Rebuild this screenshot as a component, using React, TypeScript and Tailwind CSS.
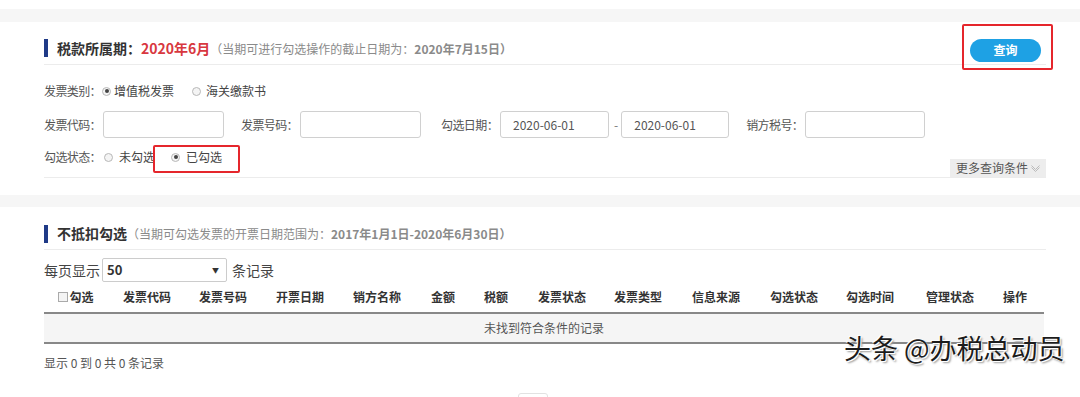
import React from "react";

const FONT = '"Noto Sans CJK SC", "Noto Sans", sans-serif';

const COLUMNS = [
  { label: "勾选", w: "w-[64px]", check: true },
  { label: "发票代码", w: "w-[78px]" },
  { label: "发票号码", w: "w-[74px]" },
  { label: "开票日期", w: "w-[80px]" },
  { label: "销方名称", w: "w-[74px]" },
  { label: "金额", w: "w-[58px]" },
  { label: "税额", w: "w-[48px]" },
  { label: "发票状态", w: "w-[84px]" },
  { label: "发票类型", w: "w-[68px]" },
  { label: "信息来源", w: "w-[88px]" },
  { label: "勾选状态", w: "w-[68px]" },
  { label: "勾选时间", w: "w-[84px]" },
  { label: "管理状态", w: "w-[76px]" },
  { label: "操作", w: "w-[54px]" },
];

function Radio({ checked }: { checked?: boolean }) {
  return (
    <span className="flex h-[9px] w-[9px] items-center justify-center rounded-full border border-[#b8b8b8] bg-[#f4f4f4]">
      {checked && <span className="h-[4px] w-[4px] rounded-full bg-[#444]" />}
    </span>
  );
}

function Label({ children }: { children: React.ReactNode }) {
  return <span className="text-[12px] tracking-[-0.6px] text-[#555]">{children}</span>;
}

function Field({ label, w, value }: { label: string; w: string; value?: string }) {
  return (
    <div className="flex items-center">
      <Label>{label}</Label>
      <div
        className={`ml-[2px] flex h-[27px] ${w} items-center rounded-[3px] border border-[#d0d0d0] bg-white pl-[12px] text-[12px] text-[#555]`}
      >
        {value}
      </div>
    </div>
  );
}

function Title({ main, note, date }: { main: React.ReactNode; note: string; date: string }) {
  return (
    <div className="flex items-center">
      <span className="h-[18px] w-[4px] bg-[#1f3a87]" />
      <span className="ml-[9px] flex items-baseline leading-[18px]">
        {main}
        <span className="text-[12px] text-[#8a8a8a]">{note}</span>
        <span className="text-[12px] font-bold text-[#8a8a8a]">{date}</span>
      </span>
    </div>
  );
}

export default function App() {
  return (
    <div
      className="relative h-[397px] w-[1080px] overflow-hidden bg-white text-[#555]"
      style={{ fontFamily: FONT }}
    >
      <div className="h-[9px] bg-white" />
      <div className="h-[13px] bg-[#f6f6f6]" />

      {/* 查询条件 */}
      <section className="pb-[17px] pl-[44px] pr-[34px]">
        <div className="box-content flex h-[18px] items-center border-b border-[#ececec] pb-[7px] pt-[17px]">
          <Title
            main={
              <>
                <span className="text-[14px] font-bold text-[#333]">税款所属期：</span>
                <span className="text-[14px] font-bold text-[#d8383f]">2020年6月</span>
              </>
            }
            note="（当期可进行勾选操作的截止日期为："
            date="2020年7月15日）"
          />
          <button
            type="button"
            className="ml-auto mr-[5px] -mb-[5px] -mt-[1px] flex h-[23px] w-[71px] items-center justify-center rounded-full bg-[#1ea1e4] text-[12px] font-bold text-white"
          >
            查询
          </button>
        </div>

        <div className="mt-[18px] flex h-[16px] items-center text-[12px] leading-[16px]">
          <Label>发票类别：</Label>
          <span className="ml-[1px]"><Radio checked /></span>
          <span className="ml-[3px] text-[#444]">增值税发票</span>
          <span className="ml-[18px]"><Radio /></span>
          <span className="ml-[5px] text-[#444]">海关缴款书</span>
        </div>

        <div className="mt-[12px] flex items-center">
          <Field label="发票代码：" w="w-[121px]" />
          <div className="ml-[17px]">
            <Field label="发票号码：" w="w-[121px]" />
          </div>
          <div className="ml-[20px]">
            <Field label="勾选日期：" w="w-[109px]" value="2020-06-01" />
          </div>
          <span className="ml-[5px] text-[12px] text-[#777]">-</span>
          <div className="ml-[3px] flex h-[27px] w-[108px] items-center rounded-[3px] border border-[#d0d0d0] pl-[12px] text-[12px] text-[#555]">
            2020-06-01
          </div>
          <div className="ml-[17px]">
            <Field label="销方税号：" w="w-[120px]" />
          </div>
        </div>

        <div className="mt-[11px] flex h-[16px] items-center text-[12px] leading-[16px]">
          <Label>勾选状态：</Label>
          <span className="ml-[3px]"><Radio /></span>
          <span className="ml-[6px] text-[#444]">未勾选</span>
          <span className="ml-[16px]"><Radio checked /></span>
          <span className="ml-[6px] text-[#444]">已勾选</span>
        </div>

        <div className="-mt-[6px] flex justify-end border-b border-[#ececec]">
          <div className="flex h-[18px] items-center gap-[3px] bg-[#ededed] px-[6px] text-[12px] text-[#555]">
            更多查询条件
            <svg width="9" height="7" viewBox="0 0 9 7" fill="none" stroke="#bbb" strokeWidth="1">
              <path d="M0.5 0.5 L4.5 4.5 L8.5 0.5" />
              <path d="M0.5 2.5 L4.5 6.5 L8.5 2.5" />
            </svg>
          </div>
        </div>
      </section>

      <div className="h-[12px] bg-[#f6f6f6]" />

      {/* 不抵扣勾选 */}
      <section className="pl-[44px] pr-[34px]">
        <div className="box-content flex h-[17px] items-center border-b border-[#ececec] pb-[7px] pt-[18px]">
          <Title
            main={<span className="text-[14px] font-bold text-[#333]">不抵扣勾选</span>}
            note="（当期可勾选发票的开票日期范围为："
            date="2017年1月1日-2020年6月30日）"
          />
        </div>

        <div className="mt-[8px] flex h-[24px] items-center text-[14px] text-[#444]">
          <span>每页显示</span>
          <div className="ml-[2px] flex h-[24px] w-[125px] items-center rounded-[2px] border border-[#ccc] pl-[4px] pr-[7px]">
            <span className="text-[13px] font-bold text-[#333]">50</span>
            <span className="ml-auto text-[7px] text-[#333]">▼</span>
          </div>
          <span className="ml-[5px]">条记录</span>
        </div>

        <div className="w-[1000px]">
          <div className="flex h-[32px] items-center border-b-2 border-[#888]">
            {COLUMNS.map((c) => (
              <div
                key={c.label}
                className={`${c.w} flex items-center justify-center text-[12px] font-bold text-[#333]`}
              >
                {c.check && (
                  <span className="mr-[1px] h-[10px] w-[10px] border border-[#aaa] bg-[#f4f4f4]" />
                )}
                {c.label}
              </div>
            ))}
          </div>
          <div className="flex h-[30px] items-center justify-center border-b-2 border-[#888] bg-[#f5f5f5] text-[12px] text-[#555]">
            未找到符合条件的记录
          </div>
        </div>

        <div className="mt-[11px] text-[12px] leading-[16px] text-[#555]">显示 0 到 0 共 0 条记录</div>
        <div className="ml-[474px] mt-[22px] h-[6px] w-[30px] rounded-t-[3px] border border-[#e2e2e2]" />
      </section>

      {/* 标注框 */}
      <div className="absolute left-[962px] top-[24px] h-[46px] w-[91px] rounded-[2px] border-2 border-[#e5262c]" />
      <div className="absolute left-[153px] top-[145px] h-[28px] w-[87px] rounded-[2px] border-2 border-[#e5262c]" />

      {/* 水印 */}
      <div className="absolute left-[844px] top-[330px] text-[27px] leading-[36px] text-[#1c1c1c] [text-shadow:1px_1px_0_#fff,-1px_-1px_0_#fff,2px_2px_2px_#999]">
        头条 @办税总动员
      </div>
    </div>
  );
}
